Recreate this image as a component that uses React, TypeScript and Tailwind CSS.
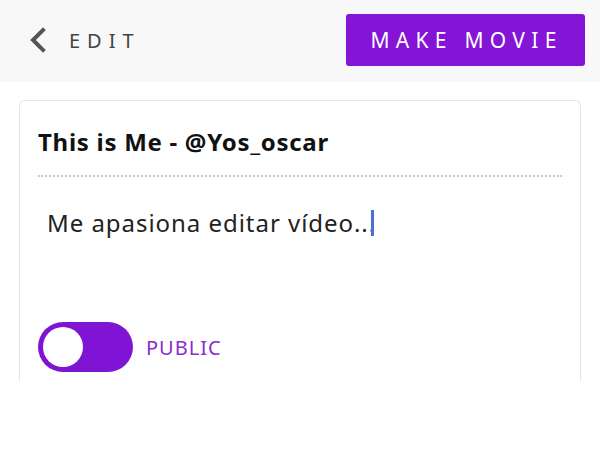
export default function App() {
  return (
    <div className="w-[600px] h-[457px] bg-white font-['Noto_Sans',sans-serif] overflow-hidden">
      <header className="h-[82px] bg-[#f8f8f8] flex items-center justify-between pl-[28px] pr-[15px]">
        <div className="flex items-center">
          <svg width="20" height="26" viewBox="0 0 20 26" className="mt-[-2px]">
            <path d="M15 3 L5 13 L15 23" fill="none" stroke="#555" strokeWidth="4" strokeLinecap="square" strokeLinejoin="miter" />
          </svg>
          <span className="ml-[21px] text-[20px] tracking-[0.35em] text-[#444] leading-none">EDIT</span>
        </div>
        <button className="w-[239px] h-[52px] mt-[-2px] bg-[#8414d6] rounded-[3px] text-white text-[21px] tracking-[0.3em] pl-[2px] leading-none">
          MAKE MOVIE
        </button>
      </header>
      <main className="px-[19px] pt-[18px]">
        <div className="h-[281px] border border-b-0 border-[#e6e6e6] rounded-t-[6px] px-[18px]">
          <h1 className="mt-[26px] text-[24px] font-bold tracking-[0.03em] text-[#111] leading-[30px]">This is Me - @Yos_oscar</h1>
          <div className="mt-[18px] border-t-2 border-dotted border-[#c8c8c8]" />
          <p className="mt-[31px] ml-[9px] text-[24px] tracking-[0.04em] text-[#222] leading-[30px] flex items-center">
            Me apasiona editar vídeo...
            <span className="inline-block w-[3px] h-[26px] bg-[#4a6fd8] ml-[-5px]" />
          </p>
          <div className="mt-[84px] flex items-center">
            <div className="w-[95px] h-[50px] rounded-full bg-[#7f14d4] flex items-center pl-[5px]">
              <div className="w-[40px] h-[40px] rounded-full bg-white" />
            </div>
            <span className="ml-[13px] text-[20px] tracking-[0.05em] text-[#8a2ccf] leading-none mt-[2px]">PUBLIC</span>
          </div>
        </div>
      </main>
    </div>
  );
}
